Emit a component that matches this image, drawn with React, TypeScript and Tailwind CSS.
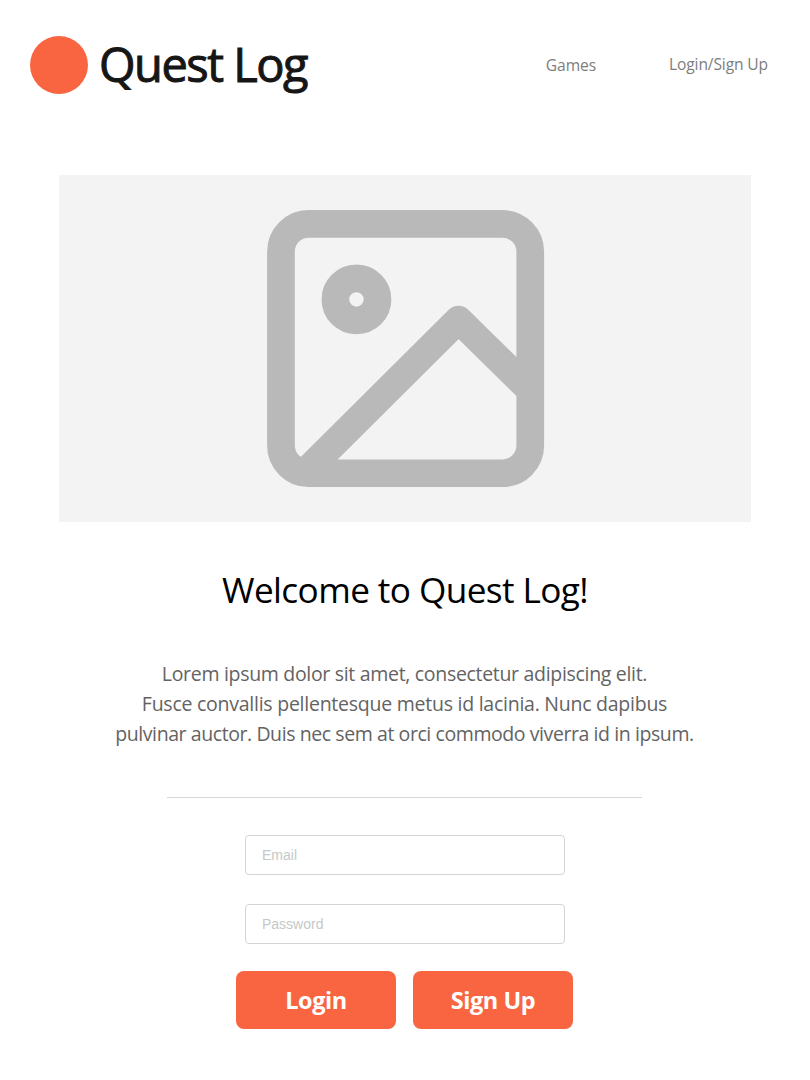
import React from "react";

const paragraph = [
  {
    text: "Lorem ipsum dolor sit amet, consectetur adipiscing elit.",
    tracking: "tracking-[-0.31px]",
  },
  {
    text: "Fusce convallis pellentesque metus id lacinia. Nunc dapibus",
    tracking: "tracking-[-0.25px]",
  },
  {
    text: "pulvinar auctor. Duis nec sem at orci commodo viverra id in ipsum.",
    tracking: "tracking-[-0.42px]",
  },
];

function Header() {
  return (
    <header className="flex h-[94px] items-end pl-[30px] pr-[42px]">
      <div className="size-[58px] shrink-0 rounded-full bg-[#f86540]" />
      <h1 className="ml-[11px] h-[58px] whitespace-nowrap text-[47px] font-normal leading-[56px] tracking-[-1.5px] text-[#161616] [-webkit-text-stroke:1px_#161616]">
        Quest Log
      </h1>
      <nav className="ml-auto flex h-[58px] items-center gap-[73px] whitespace-nowrap pb-[2px] text-[15.6px] leading-6 text-[#7d7d7d]">
        <a className="pt-px tracking-[-0.1px]">Games</a>
        <a className="pb-px tracking-[-0.13px]">Login/Sign Up</a>
      </nav>
    </header>
  );
}

function Hero() {
  return (
    <div className="mt-[81px] flex h-[347px] w-[692px] items-center justify-center bg-[#f3f3f3]">
      <svg
        className="ml-px size-[332.4px]"
        viewBox="-0.03 -0.03 24 24"
        fill="none"
        stroke="#b9b9b9"
        strokeWidth="2"
        strokeLinejoin="round"
      >
        <rect x="3" y="3" width="18" height="18" rx="2" />
        <circle cx="8.45" cy="8.45" r="1.52" />
        <polyline points="21 15 15.82 9.91 4.5 21.17" />
      </svg>
    </div>
  );
}

function Field({ label, type }: { label: string; type: string }) {
  return (
    <input
      type={type}
      placeholder={label}
      className="h-10 w-80 rounded-[4px] border border-[#d2d5d5] bg-white px-4 font-['Liberation_Sans',sans-serif] text-[14px] text-[#333333] placeholder:text-[#c3c9c9]"
    />
  );
}

function Action({ label }: { label: string }) {
  return (
    <button
      type="button"
      className="h-[58px] w-40 rounded-lg bg-[#f86540] pt-[2px] text-[23.5px] font-bold tracking-[-0.45px] text-white"
    >
      {label}
    </button>
  );
}

export default function App() {
  return (
    <div className="h-[1080px] w-[810px] overflow-hidden bg-white font-['Open_Sans',sans-serif]">
      <Header />
      <main className="flex flex-col items-center">
        <Hero />
        <h2 className="mt-[43px] whitespace-nowrap text-[35.2px] leading-[48px] tracking-[-0.6px] text-black">
          Welcome to Quest Log!
        </h2>
        <div className="mr-px mt-[46px] flex flex-col items-center whitespace-nowrap text-[19.5px] leading-[30px] text-[#636363]">
          {paragraph.map((line) => (
            <p key={line.text} className={line.tracking}>
              {line.text}
            </p>
          ))}
        </div>
        <hr className="mr-px mt-[48px] w-[475px] border-t border-[#d6d6d6]" />
        <form className="mt-[37px] flex flex-col items-center">
          <Field label="Email" type="email" />
          <div className="mt-[29px]">
            <Field label="Password" type="password" />
          </div>
          <div className="mr-px mt-[27px] flex gap-[17px]">
            <Action label="Login" />
            <Action label="Sign Up" />
          </div>
        </form>
      </main>
    </div>
  );
}
